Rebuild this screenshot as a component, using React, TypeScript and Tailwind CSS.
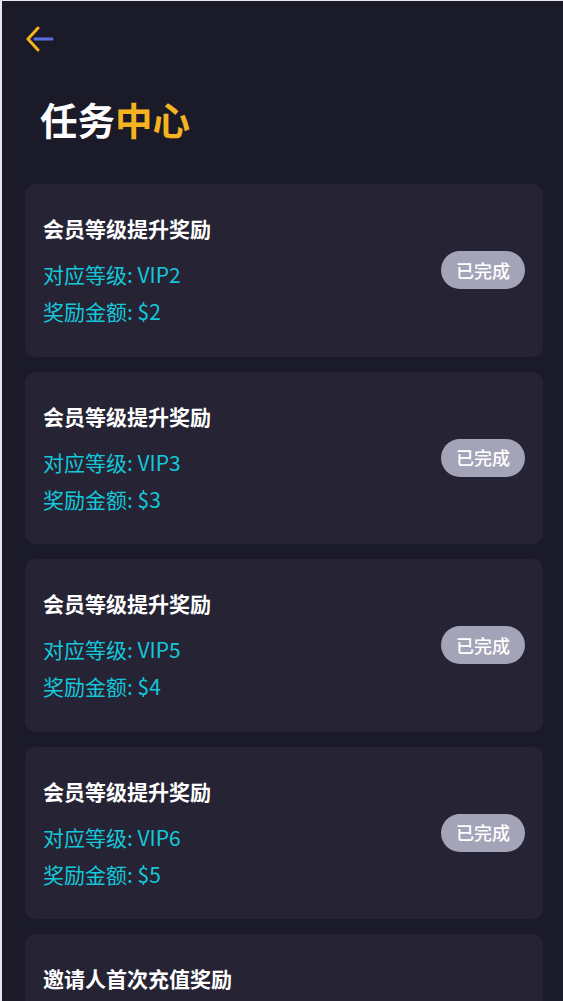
const tasks = [
  { title: "会员等级提升奖励", level: "VIP2", amount: "$2", done: true },
  { title: "会员等级提升奖励", level: "VIP3", amount: "$3", done: true },
  { title: "会员等级提升奖励", level: "VIP5", amount: "$4", done: true },
  { title: "会员等级提升奖励", level: "VIP6", amount: "$5", done: true },
  { title: "邀请人首次充值奖励", level: "VIP1", amount: "$1", done: true },
];

function BackArrow() {
  return (
    <svg width="28" height="26" viewBox="0 0 28 26" fill="none">
      <path d="M9 13H26" stroke="#5b6ee8" strokeWidth="3" strokeLinecap="round" />
      <path d="M12 2L2 13L12 24" stroke="#f5b321" strokeWidth="3" strokeLinecap="round" strokeLinejoin="round" />
    </svg>
  );
}

export default function App() {
  return (
    <div
      className="h-[1001px] overflow-hidden bg-[#1b1a28] border-t border-l-2 border-[#e8e8ec]"
      style={{ fontFamily: '"Noto Sans CJK SC", "Noto Sans", sans-serif' }}
    >
      <div className="pl-[24px] pt-[25px]">
        <BackArrow />
      </div>
      <h1 className="mt-[45px] ml-[38px] text-[37.5px] leading-[44px] font-bold text-white">
        任务<span className="text-[#f5b321]">中心</span>
      </h1>
      <div className="mt-[43px] pl-[23px] pr-[20px] flex flex-col gap-[15px]">
        {tasks.map((t, i) => (
          <div
            key={i}
            className="h-[172.5px] shrink-0 rounded-[10px] bg-[#252334] px-[18px] flex items-center justify-between"
          >
            <div className="self-start pt-[30px] flex flex-col">
              <div className="text-[21px] leading-[28px] font-bold text-white">{t.title}</div>
              <div className="mt-[14px] text-[21px] leading-[37px] text-[#14c8da]">对应等级: {t.level}</div>
              <div className="text-[21px] leading-[37px] text-[#14c8da]">奖励金额: {t.amount}</div>
            </div>
            {t.done && (
              <span className="h-[38px] w-[84px] rounded-full bg-[#a4a4b8] text-white text-[18px] font-medium flex items-center justify-center">
                已完成
              </span>
            )}
          </div>
        ))}
      </div>
    </div>
  );
}
